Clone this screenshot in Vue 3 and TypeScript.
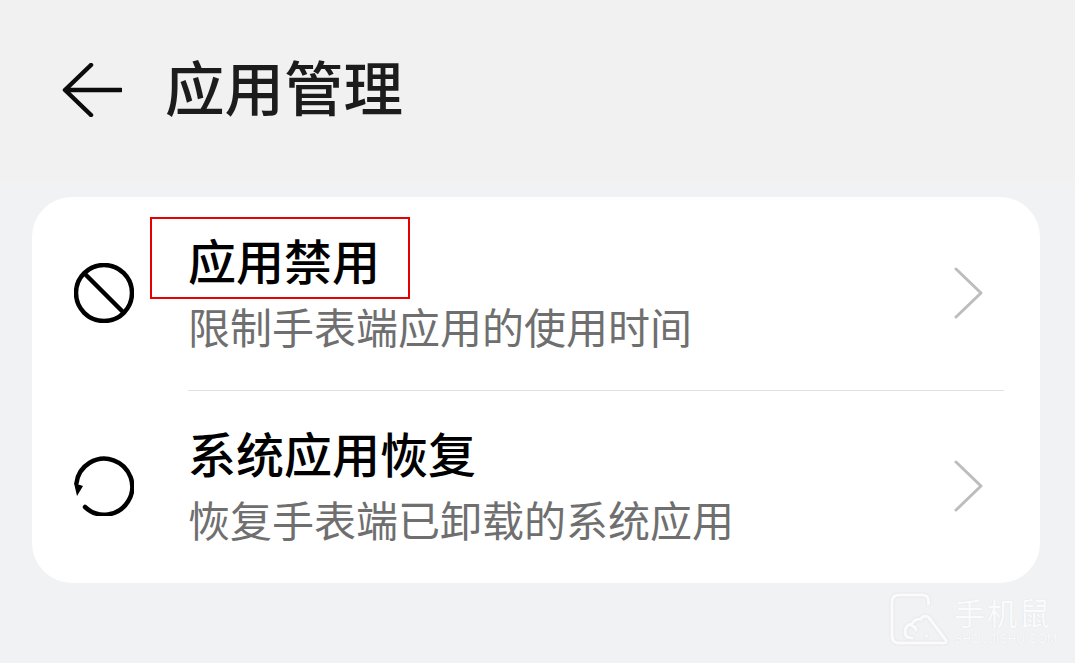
<template>
  <div class="page">
    <header class="header">
      <svg class="back" viewBox="0 0 60 54" fill="none">
        <path d="M29 2 L3 27 H59 M3 27 L29 52" />
      </svg>
      <h1 class="title">应用管理</h1>
    </header>

    <section class="card">
      <div v-for="(item, i) in items" :key="i" class="row">
        <div class="icon">
          <svg v-if="item.icon === 'ban'" viewBox="0 0 60 60" fill="none" class="glyph">
            <circle cx="30" cy="30" r="28" />
            <path d="M10.5 10.5 L49.5 49.5" />
          </svg>
          <svg v-else viewBox="0 0 60 60" fill="none" class="glyph">
            <path d="M2.5 27 A28 28 0 1 1 11 51" />
            <path class="tip" d="M0 27 L9 30 L3 40 Z" />
          </svg>
        </div>
        <div class="body" :class="{ 'body--line': i > 0 }">
          <div class="text">
            <div class="name">{{ item.name }}</div>
            <div class="desc">{{ item.desc }}</div>
          </div>
          <svg class="chevron" viewBox="0 0 30 52" fill="none">
            <path d="M2 2 L27 26 L2 50" />
          </svg>
        </div>
      </div>
      <div class="mark"></div>
    </section>

    <div class="watermark">
      <svg class="wm-logo" viewBox="-2 -2 60 56" fill="none">
        <path d="M36.5 9 V6 Q36.5 0 30 0 H7 Q0 0 0 7 V41 Q0 48 7 48 H52 Q56 48 53 44 L38 24" />
        <path d="M38 24 A5 5 0 0 0 29 24 Q22 24 20 29 Q13 30 13 37 Q13 43 20 43 M20 31 Q24 32 24 35" />
        <circle class="wm-eye" cx="34.5" cy="41" r="1.5" />
      </svg>
      <div class="wm-text">
        <div class="wm-cn">手机鼠</div>
        <div class="wm-en">SHOUJISHU.COM</div>
      </div>
    </div>
  </div>
</template>

<script setup lang="ts">
interface Item {
  icon: "ban" | "restore";
  name: string;
  desc: string;
}

const items: Item[] = [
  { icon: "ban", name: "应用禁用", desc: "限制手表端应用的使用时间" },
  { icon: "restore", name: "系统应用恢复", desc: "恢复手表端已卸载的系统应用" },
];
</script>

<style>
html,
body {
  margin: 0;
  background: #f1f2f4;
}
</style>

<style scoped>
.page {
  position: relative;
  width: 1075px;
  height: 663px;
  overflow: hidden;
  background: #f1f2f4;
  font-family: "Noto Sans CJK SC", "Noto Sans", sans-serif;
}

.header {
  display: flex;
  align-items: center;
  height: 181px;
  padding: 0 0 5px 62px;
  box-sizing: border-box;
  background: #f1f1f2;
}

.back {
  width: 60px;
  height: 54px;
  margin-top: 3px;
}

.back path {
  stroke: #0c0c0c;
  stroke-width: 4.5;
  stroke-linecap: round;
  stroke-linejoin: round;
}

.title {
  margin: -4px 0 0 43px;
  font-size: 59.5px;
  font-weight: 500;
  line-height: 1;
  color: #1c1c1c;
}

.card {
  position: relative;
  margin: 16px 35px 0 32px;
  height: 386px;
  background: #fff;
  border-radius: 40px;
}

.row {
  display: flex;
  height: 193px;
}

.icon {
  width: 156px;
  display: flex;
  align-items: center;
  padding: 0 0 2px 42px;
  box-sizing: border-box;
}

.glyph {
  width: 60px;
  height: 60px;
}

.glyph circle,
.glyph path {
  stroke: #000;
  stroke-width: 4.5;
  stroke-linecap: round;
}

.glyph .tip {
  fill: #000;
  stroke-width: 0;
}

.body {
  flex: 1;
  display: flex;
  align-items: center;
  justify-content: space-between;
  margin-right: 36px;
  padding-right: 20px;
}

.body--line {
  border-top: 1px solid #e2e2e2;
}

.name {
  font-size: 48px;
  font-weight: 500;
  line-height: 64px;
  color: #000;
}

.desc {
  font-size: 42px;
  line-height: 70px;
  color: #6f6f6f;
}

.chevron {
  width: 30px;
  height: 52px;
  margin-top: -2px;
}

.chevron path {
  stroke: #bdbdbd;
  stroke-width: 3;
  stroke-linecap: round;
  stroke-linejoin: round;
}

.mark {
  position: absolute;
  left: 118px;
  top: 20px;
  width: 260px;
  height: 82px;
  box-sizing: border-box;
  border: 2px solid #e60000;
}

.watermark {
  position: absolute;
  left: 890px;
  top: 593px;
  display: flex;
  gap: 4px;
}

.wm-logo {
  width: 60px;
  height: 56px;
  filter: drop-shadow(0 0 1px #dcdde0);
}

.wm-logo path {
  stroke: #fbfbfc;
  stroke-width: 3;
  stroke-linecap: round;
  stroke-linejoin: round;
}

.wm-eye {
  fill: #fbfbfc;
}

.wm-text {
  color: #fbfbfc;
  text-shadow: 0 0 1px #d8d9dc;
}

.wm-cn {
  font-size: 31px;
  line-height: 38px;
  letter-spacing: 1.5px;
  white-space: nowrap;
}

.wm-en {
  font-family: "Liberation Sans", sans-serif;
  font-size: 12px;
  line-height: 14px;
  margin-top: 1px;
  letter-spacing: 0.2px;
  white-space: nowrap;
}
</style>
